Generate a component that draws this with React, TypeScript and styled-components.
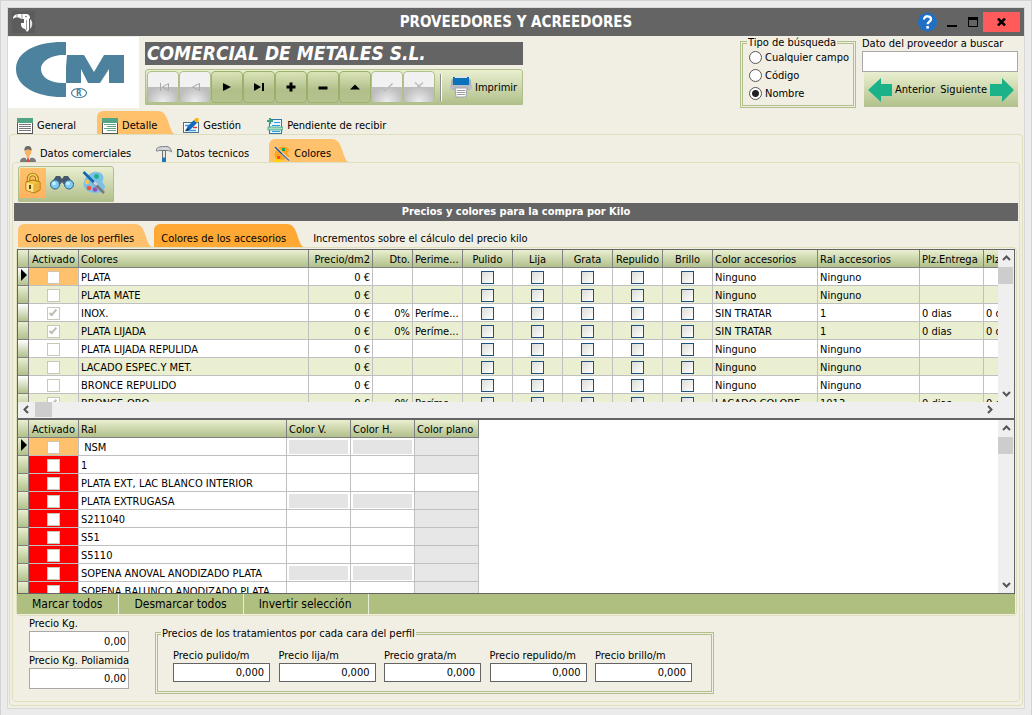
import React from "react";
import styled, { createGlobalStyle, css } from "styled-components";

const c = {
  frame: "#ebebeb",
  body: "#f1efe3",
  dark: "#646464",
  line: "#e0dfbd",
  green: "#b1c08b",
  greenLight: "#e9efd0",
  bar: "#afbf80",
  orange: "#ffc16b",
  orangeDark: "#ffa833",
  cell: "#c0c0c0",
};

const fade = `linear-gradient(${c.greenLight}, ${c.green})`;

const GlobalStyle = createGlobalStyle`
  *, *::before, *::after { box-sizing: border-box; }
  body { margin: 0; background: ${c.frame}; }
  body, button, input, legend, table {
    font-family: "DejaVu Sans Condensed", Tahoma, "DejaVu Sans", sans-serif;
    font-size: 11px;
    line-height: 15px;
    color: #000;
  }
  button { border: 0; padding: 0; background: none; white-space: nowrap; }
  svg { display: block; flex: none; }
`;

const Frame = styled.div`
  min-width: 1000px;
  min-height: 100vh;
  padding: 7px;
  border: 1px solid #d3d3d3;
  background: ${c.frame};
`;

const Window = styled.main`
  background: ${c.body};
  box-shadow: 0 0 0 1px #d9d9d9;
  padding-bottom: 2px;
`;

/* ---------- title bar ---------- */

const TitleBar = styled.header`
  display: grid;
  grid-template-columns: 1fr auto 1fr;
  align-items: center;
  height: 28px;
  padding: 0 4px;
  background: ${c.dark};
`;

const Title = styled.h1`
  margin: 0;
  font-size: 15px;
  line-height: 20px;
  font-weight: bold;
  color: #fff;
`;

const WindowButtons = styled.div`
  display: flex;
  justify-content: flex-end;
  align-items: center;
`;

const WindowButton = styled.button<{ $kind?: "close" | "help" }>`
  display: grid;
  place-items: center;
  width: ${(p) => (p.$kind === "close" ? 37 : 21)}px;
  height: 20px;
  margin-right: ${(p) => (p.$kind === "help" ? 3 : 0)}px;
  background: ${(p) => (p.$kind === "close" ? "#ff5b5b" : "none")};
`;

/* ---------- provider header ---------- */

const ProviderHeader = styled.section`
  display: flex;
  height: 75px;
  padding-right: 6px;
`;

const Logo = styled.div`
  width: 131px;
  height: 71px;
  margin: 1px 6px 0 0;
  background: #fff;
`;

const ProviderMain = styled.div`
  display: flex;
  flex-direction: column;
  gap: 4px;
  width: 378px;
  margin: 6px auto 0 0;
`;

const ProviderName = styled.h2`
  margin: 0;
  padding-left: 2px;
  background: ${c.dark};
  color: #fff;
  font-size: 19px;
  line-height: 23px;
  font-weight: bold;
  font-style: italic;
`;

const Navigator = styled.div`
  display: flex;
  align-items: center;
  height: 36px;
  padding: 0 1px;
  border: 1px solid ${c.green};
  border-radius: 3px 3px 0 0;
  background: ${fade};
`;

const NavButton = styled.button`
  display: grid;
  place-items: center;
  width: 32px;
  height: 32px;
  border: 1px solid #9cb06c;
  border-radius: 4px;
  background: linear-gradient(#dbe4b9, ${c.green} 60%, #b5c48f);
  &:disabled {
    border-color: ${c.green};
    background: radial-gradient(ellipse at 50% 100%, #eeeeee, #bdbdbd 75%) 0 100% / 100% 50% no-repeat, #f1f1f1;
  }
`;

const NavDivider = styled.span`
  width: 2px;
  height: 27px;
  margin: 0 8px 0 5px;
  border-left: 1px solid #8f8f8f;
  border-right: 1px solid #fff;
`;

const PrintButton = styled.button`
  display: flex;
  align-items: center;
  gap: 3px;
`;

const GroupBox = styled.fieldset`
  margin: 0;
  min-width: 0;
  border: 3px double ${c.green};
  legend {
    padding: 0 1px;
    line-height: 13px;
  }
`;

const SearchType = styled(GroupBox)`
  width: 116px;
  height: 72px;
  padding: 0 4px 3px;
`;

const RadioLabel = styled.label`
  display: flex;
  align-items: center;
  gap: 3px;
  height: 18px;
  padding: 0 0 2px 2px;
  white-space: nowrap;
`;

const Radio = styled.input`
  appearance: none;
  flex: none;
  width: 13px;
  height: 13px;
  margin: 0;
  border: 1px solid #555;
  border-radius: 50%;
  background: #fff;
  &:checked {
    background: radial-gradient(circle, #222 0 3px, #fff 4px);
  }
`;

const Search = styled.div`
  display: flex;
  flex-direction: column;
  width: 156px;
  margin-left: 6px;
`;

const SearchInput = styled.input`
  height: 21px;
  width: 100%;
  border: 1px solid #a8a8a8;
  background: #fff;
`;

const SearchNav = styled.div`
  display: flex;
  justify-content: space-between;
  height: 35px;
  margin-left: 2px;
  padding: 0 4px;
  background: ${fade};
  button {
    display: flex;
    align-items: center;
    gap: 3px;
  }
`;

/* ---------- tabs and panels ---------- */

const TabRow = styled.nav<{ $inset: number; $gap?: number }>`
  display: flex;
  gap: ${(p) => p.$gap ?? 0}px;
  height: 23px;
  padding-left: ${(p) => p.$inset}px;
`;

const Tab = styled.button<{ $fill?: string; $plain?: boolean }>`
  position: relative;
  display: flex;
  align-items: center;
  gap: 4px;
  height: 23px;
  padding: ${(p) => (p.$plain ? "6px 20px 0 7px" : "6px 20px 0 5px")};
  z-index: 0;
  ${(p) =>
    p.$fill &&
    css`
      &::before,
      &::after {
        content: "";
        position: absolute;
        z-index: -1;
        top: 0;
        bottom: 0;
        background: ${p.$fill};
      }
      &::before {
        left: 0;
        right: 19px;
        border-top-left-radius: 6px;
      }
      &::after {
        right: 3px;
        width: 17px;
        clip-path: path("M0 0 C6 0 8 3 10 8 C13 16 14 21 17 23 L0 23 Z");
      }
    `}
`;

const Panel = styled.section<{ $pad: string; $margin: string }>`
  margin: ${(p) => p.$margin};
  padding: ${(p) => p.$pad};
  border: 1px solid ${c.line};
  border-radius: 4px;
`;

const ToolStrip = styled.div`
  display: flex;
  width: 96px;
  height: 36px;
  margin: 3px 5px 0;
  padding: 1px;
  border: 1px solid ${c.green};
  border-radius: 3px 3px 0 0;
  background: ${fade};
`;

const ToolButton = styled.button<{ $active?: boolean }>`
  display: grid;
  place-items: center;
  width: ${(p) => (p.$active ? 26 : 32)}px;
  height: 30px;
  background: ${(p) => (p.$active ? `linear-gradient(${c.orange}, #ffb35f)` : "none")};
`;

const Banner = styled.h3`
  margin: 1px 1px 3px;
  background: ${c.dark};
  color: #fff;
  font-size: 11px;
  line-height: 18px;
  text-align: center;
`;

/* ---------- grids ---------- */

const Grid = styled.div<{ $second?: boolean }>`
  display: grid;
  grid-template-columns: minmax(0, 1fr) 16px;
  grid-template-rows: ${(p) => (p.$second ? "173px" : "152px 16px")};
  border: 1px solid ${c.dark};
  background: #fff;
`;

const Viewport = styled.div`
  overflow: hidden;
`;

const Table = styled.table<{ $width: number }>`
  width: ${(p) => p.$width}px;
  table-layout: fixed;
  border-collapse: separate;
  border-spacing: 0;
`;

type Align = "left" | "right" | "center";

const Th = styled.th<{ $align?: Align }>`
  height: 18px;
  padding: 2px 2px 0;
  border-right: 1px solid #808080;
  border-bottom: 1px solid #808080;
  background: ${fade};
  font-weight: normal;
  line-height: 15px;
  text-align: ${(p) => p.$align ?? "left"};
  white-space: nowrap;
  overflow: hidden;
`;

const Td = styled.td<{ $align?: Align; $fill?: string }>`
  height: 18px;
  padding: 2px 2px 0;
  border-right: 1px solid ${c.cell};
  border-bottom: 1px solid ${c.cell};
  background: ${(p) => p.$fill ?? "none"};
  line-height: 15px;
  text-align: ${(p) => p.$align ?? "left"};
  white-space: pre;
  overflow: hidden;
`;

const CheckTd = styled(Td)`
  padding: 1px 0 0;
  line-height: 0;
`;

const Gutter = styled.td<{ $white?: boolean }>`
  height: 18px;
  padding: 1px 0 0 3px;
  border-right: 1px solid #808080;
  border-bottom: 1px solid #808080;
  background: linear-gradient(${(p) => (p.$white ? "#fff" : c.greenLight)}, ${c.green});
  vertical-align: top;
`;

const Row = styled.tr<{ $alt?: boolean }>`
  background: ${(p) => (p.$alt ? c.greenLight : "#fff")};
`;

const Check = styled.input<{ $muted?: boolean }>`
  appearance: none;
  position: relative;
  width: 13px;
  height: 13px;
  margin: 0;
  border: 1px solid ${(p) => (p.$muted ? "#c8c8ba" : "#1c5180")};
  background: ${(p) => (p.$muted ? "#fff" : "linear-gradient(135deg, #dcdcd7, #fff)")};
  vertical-align: middle;
  &:checked::after {
    content: "";
    position: absolute;
    left: 3px;
    top: 0;
    width: 4px;
    height: 8px;
    border: solid #bcbcae;
    border-width: 0 2px 2px 0;
    transform: rotate(42deg);
  }
`;

const Swatch = styled.div`
  height: 14px;
  margin-bottom: 1px;
  background: #e4e4e4;
`;

const ScrollBar = styled.div<{ $horizontal?: boolean }>`
  display: flex;
  flex-direction: ${(p) => (p.$horizontal ? "row" : "column")};
  background: #efefef;
`;

const ScrollCorner = styled.div`
  background: #efefef;
`;

const ScrollButton = styled.button<{ $horizontal?: boolean }>`
  display: grid;
  place-items: center;
  width: ${(p) => (p.$horizontal ? 17 : 16)}px;
  height: ${(p) => (p.$horizontal ? 15 : 17)}px;
`;

const Thumb = styled.div<{ $horizontal?: boolean }>`
  width: ${(p) => (p.$horizontal ? 17 : 15)}px;
  height: ${(p) => (p.$horizontal ? 15 : 17)}px;
  margin-bottom: auto;
  margin-right: auto;
  background: #cdcdcd;
`;

const ActionBar = styled.div`
  display: flex;
  height: 20px;
  background: ${c.bar};
  button {
    padding: 0 16px 0 15px;
    border-right: 1px solid #e8eed8;
    font-size: 12px;
    line-height: 20px;
  }
`;

/* ---------- prices ---------- */

const Prices = styled.section`
  display: flex;
  align-items: flex-start;
  gap: 26px;
  padding: 0 16px 7px;
`;

const KgPrices = styled.div`
  display: flex;
  flex-direction: column;
  gap: 1px;
  width: 100px;
`;

const Field = styled.label<{ $strong?: boolean }>`
  display: flex;
  flex-direction: column;
  width: ${(p) => (p.$strong ? "97px" : "auto")};
  white-space: nowrap;
  input {
    width: 100%;
    height: ${(p) => (p.$strong ? 19 : 21)}px;
    padding: 0 ${(p) => (p.$strong ? 5 : 2)}px;
    border: 1px solid ${(p) => (p.$strong ? c.dark : "#a8a8a8")};
    background: #fff;
    text-align: right;
  }
`;

const Treatments = styled(GroupBox)`
  display: flex;
  justify-content: space-between;
  width: 559px;
  height: 67px;
  margin-top: 11px;
  padding: 8px 19px 8px 15px;
  legend {
    margin-left: -12px;
  }
`;

/* ---------- icons ---------- */

const ToucanIcon = () => (
  <svg width="23" height="22" viewBox="0 0 23 22">
    <rect width="23" height="22" fill="#5c5c5c" />
    <path d="M1 8 C1 4 4 3 8 3 H14 C17 3 18 5 18 7 L17 8 V19 L15 21 L13 18 C9 17 9 14 9 12 H12 V8 H9 L8 7 C6 6 3 6 1 8Z" fill="#fff" />
    <path d="M18 8 C21 10 21 15 18 18Z" fill="#e4e4e4" />
    <path d="M5 3V7M10 3V8M14.500 9V19" stroke="#9a9a9a" fill="none" />
    <circle cx="14" cy="5.500" r="0.800" fill="#646464" />
  </svg>
);

const HelpIcon = () => (
  <svg width="19" height="20" viewBox="0 0 19 20">
    <circle cx="9.500" cy="10" r="9.500" fill="#1f6fc4" />
    <path d="M6 7.500 C6 3 13 3.500 13 7.200 C13 9.600 9.600 9.600 9.600 12.300" fill="none" stroke="#fff" strokeWidth="2.300" />
    <rect x="8.300" y="14" width="2.600" height="2.600" fill="#fff" />
  </svg>
);

const LogoMark = () => (
  <svg width="131" height="71" viewBox="0 0 131 71">
    <g fill="#4c829e">
      <path d="M58 5 C30 4 8 14 8 32 C8 50 30 61 58 60 V46 C44 47 33 41 33 32 C33 24 44 17 58 18 Z" />
      <path d="M59 18 H76 L86 35 L96 18 H116 V46 H101 V32 L92 46 H80 L73 32 V46 H58 V30 Z" />
    </g>
    <ellipse cx="71" cy="56" rx="7.500" ry="4.500" fill="#fff" stroke="#4c829e" strokeWidth="1.200" />
    <text x="68" y="59" fontSize="8" fontWeight="bold" fill="#4c829e">R</text>
  </svg>
);

const glyphs: Record<string, React.ReactNode> = {
  first: <path d="M4.500 3V11M12.500 3.500 L6.500 7 L12.500 10.500Z" stroke="#a9a9a9" fill="none" />,
  prev: <path d="M11.500 3.500 L4.500 7 L11.500 10.500Z" stroke="#a9a9a9" fill="none" />,
  next: <path d="M3 3 L11 7 L3 11Z" />,
  last: <path d="M2 3 L9 7 L2 11Z M10 3H12V11H10Z" />,
  add: <path d="M5.500 2.500H8.500V5.500H11.500V8.500H8.500V11.500H5.500V8.500H2.500V5.500H5.500Z" />,
  remove: <path d="M2.500 6.500H11.500V9.500H2.500Z" />,
  up: <path d="M2 9.500 L7 4.500 L12 9.500Z" />,
  accept: <path d="M2.500 8 L5 11 L12.500 3.500" stroke="#bcbcbc" strokeWidth="1.500" fill="none" />,
  cancel: <path d="M3 2.500 L7 6 L11 2.500 M4.500 8 L7 6 L9.500 8" stroke="#bcbcbc" strokeWidth="1.500" fill="none" />,
};

const Glyph = ({ name }: { name: string }) => (
  <svg width="14" height="14" viewBox="0 0 14 14">{glyphs[name]}</svg>
);

const PrinterIcon = () => (
  <svg width="22" height="22" viewBox="0 0 22 22">
    <rect x="1" y="3" width="20" height="11" rx="2" fill="#a9adb2" />
    <rect x="3" y="1" width="16" height="9" fill="#0a72bb" />
    <rect x="5" y="0" width="12" height="2" fill="#dfe3e6" />
    <rect x="0" y="9" width="22" height="4" rx="1" fill="#b9bdc1" />
    <path d="M5 12H17L16 21H6Z" fill="#fff" stroke="#9da1a5" />
    <path d="M6.500 14.500H15.500M6.500 16.500H15.500M7 18.500H15" stroke="#9da1a5" />
  </svg>
);

const ArrowIcon = ({ right }: { right?: boolean }) => (
  <svg width="24" height="24" viewBox="0 0 24 24">
    <path
      d={right ? "M0 6H12V0L24 12L12 24V18H0Z" : "M24 6H13V0L0 12L13 24V18H24Z"}
      fill="#1bb28a"
    />
  </svg>
);

const ListIcon = ({ detail }: { detail?: boolean }) => (
  <svg width="16" height="16" viewBox="0 0 16 16">
    <rect x="0.500" y="0.500" width="15" height="15" fill="#fff" stroke="#555" />
    <rect width="16" height="5" fill="#52a584" />
    {detail ? (
      <path d="M2 6.500H14M5 8.500H14M2 10.500H14M5 12.500H14" stroke="#5fa68b" />
    ) : (
      <path d="M2 6.500H14M2 8.500H14M2 10.500H14M2 12.500H14" stroke="#777" />
    )}
  </svg>
);

const PencilFormIcon = () => (
  <svg width="16" height="16" viewBox="0 0 16 16">
    <rect x="0.500" y="4.500" width="15" height="10" fill="#fff" stroke="#4d6f90" />
    <path d="M2 7.500H7M2 12.500H13" stroke="#2f9be0" strokeWidth="1.500" />
    <path d="M10 9.500H14" stroke="#e33" strokeWidth="1.500" />
    <path d="M3 13 L4.500 8.500 L11 2 L14 5 L7.500 11.500Z" fill="#1268c4" />
    <path d="M3 13 L4 10 L6 12Z" fill="#222" />
    <path d="M11 2 L13 0 H15.500 V3.500 L14 5Z" fill="#ffb400" />
  </svg>
);

const PendingIcon = () => (
  <svg width="16" height="16" viewBox="0 0 16 16">
    <rect x="2.500" y="1.500" width="12" height="14" fill="#eaf6fd" stroke="#2b78a8" />
    <path d="M7 4.500H13M5 7.500H13M5 13.500H13" stroke="#2f9be0" />
    <rect x="1" y="9" width="15" height="3" fill="#a5dbc7" stroke="#3fa381" strokeWidth="0.800" />
    <path d="M3 0V6M0 3H6" stroke="#3fa381" strokeWidth="2.200" />
  </svg>
);

const PersonIcon = () => (
  <svg width="16" height="16" viewBox="0 0 16 16">
    <path d="M0 16 C0 12 3 11.500 8 11.500 C13 11.500 16 12 16 16Z" fill="#777c82" />
    <path d="M5 11 L8 16 L11 11Z" fill="#fff" />
    <path d="M7.300 12H8.700L9.300 16H6.700Z" fill="#e5432e" />
    <ellipse cx="8" cy="5.500" rx="3.200" ry="4.200" fill="#f9b262" />
    <rect x="6.500" y="8" width="3" height="4" fill="#f9b262" />
    <path d="M4.500 5 C4 1 6 0 8 0 C10 0 12 1 11.500 5 C10 3 6 3 4.500 5Z" fill="#6a6a6a" />
  </svg>
);

const HammerIcon = () => (
  <svg width="16" height="16" viewBox="0 0 16 16">
    <path d="M0.500 3 C2 1 4 0.500 11 0.500 C14 1 15 3 15.500 6 C14 5 13 4.500 11 4.500 H3 C2 4.500 2 5.500 0.500 5Z" fill="#d4d6d8" stroke="#7d8185" />
    <path d="M6.500 4.500H9.500V12H6.500Z" fill="#e4e6e8" stroke="#6d7175" />
    <rect x="6" y="12" width="4" height="4" fill="#1e74b8" />
  </svg>
);

const ColorsIcon = () => (
  <svg width="16" height="16" viewBox="0 0 16 16">
    <path d="M2 4 C4 1 8 0 12 1 C15 2 16 4 14 6 C12 8 16 9 15 11 C11 14 5 15 1 12 C0 9 1 6 2 4Z" fill="#ffa41c" />
    <rect x="8" y="2" width="3" height="3" fill="#1ea35b" />
    <path d="M0 16 L2 11 L9 16Z" fill="#ffd400" />
    <rect x="3" y="10" width="3" height="3" fill="#ff4a2e" />
    <path d="M1 1 L15 14" stroke="#ffe8b8" strokeWidth="2.600" />
    <path d="M1 1 L8 8" stroke="#2a4f86" strokeWidth="1.600" />
    <path d="M8 8 L15 14.500" stroke="#4f6fa8" strokeWidth="1.600" />
  </svg>
);

const LockIcon = () => (
  <svg width="18" height="22" viewBox="0 0 18 22">
    <path d="M4.500 11V7 C4.500 1 13 1 13 7 V10" fill="none" stroke="#9a6a10" strokeWidth="3.400" />
    <path d="M4.500 11V7 C4.500 1 13 1 13 7 V10" fill="none" stroke="#f3cf55" strokeWidth="1.800" />
    <path d="M2 10 L9 8 L16 10 V18 L10 21 L2 18Z" fill="#f2c443" stroke="#a8700c" />
    <path d="M2.500 10.500 L9.500 12.500 V20.500 L2.500 18Z" fill="#fbe38f" />
    <path d="M9.500 12.500 L15.500 10.500 V17.500 L9.500 20.500Z" fill="#e9b13a" />
    <path d="M6 13V17" stroke="#6b4300" strokeWidth="2" />
  </svg>
);

const BinocularsIcon = () => (
  <svg width="24" height="14" viewBox="0 0 24 14">
    <path d="M4 3 L6 0 H10 L12 3 L14 0 H18 L20 3 L22 7 L15 10 L12 6 L9 10 L2 7Z" fill="#46586c" />
    <circle cx="5" cy="8.500" r="4.500" fill="#7ecdf2" stroke="#2d5f84" />
    <circle cx="19" cy="8.500" r="4.500" fill="#7ecdf2" stroke="#2d5f84" />
    <circle cx="4" cy="7.500" r="1.800" fill="#c9eefd" />
    <circle cx="18" cy="7.500" r="1.800" fill="#c9eefd" />
  </svg>
);

const PaletteIcon = () => (
  <svg width="24" height="24" viewBox="0 0 24 24">
    <path d="M12 1 C19 0 23 5 21 9 C19 12 23 13 23 16 C22 22 14 23 8 21 C2 19 0 13 3 8 C5 4 8 2 12 1Z" fill="#7cc0e6" />
    <circle cx="14.500" cy="5.500" r="2.400" fill="#1fae8a" />
    <circle cx="5" cy="11" r="2.200" fill="#fbc44c" />
    <circle cx="7" cy="17" r="2.300" fill="#f0533a" />
    <circle cx="13" cy="18.500" r="2.300" fill="#9a4fb5" />
    <path d="M1.500 1 L14 13.500" stroke="#1467ad" strokeWidth="2.600" />
    <path d="M13 13 L22 22" stroke="#77797c" strokeWidth="2.600" />
    <path d="M12 11 L15 14" stroke="#cfd3d6" strokeWidth="3" />
  </svg>
);

const chevrons: Record<string, string> = {
  up: "M1 6 L4.500 2.500 L8 6",
  down: "M1 3 L4.500 6.500 L8 3",
  left: "M6 1 L2.500 4.500 L6 8",
  right: "M3 1 L6.500 4.500 L3 8",
};

const Chevron = ({ to }: { to: string }) => (
  <svg width="9" height="9" viewBox="0 0 9 9">
    <path d={chevrons[to]} fill="none" stroke="#555" strokeWidth="2" />
  </svg>
);

const Marker = () => (
  <svg width="6" height="12" viewBox="0 0 6 12">
    <path d="M0 0 L6 6 L0 12Z" />
  </svg>
);

/* ---------- data ---------- */

const navItems: { icon: string; label: string; disabled?: boolean }[] = [
  { icon: "first", label: "Primero", disabled: true },
  { icon: "prev", label: "Registro anterior", disabled: true },
  { icon: "next", label: "Registro siguiente" },
  { icon: "last", label: "Último" },
  { icon: "add", label: "Añadir" },
  { icon: "remove", label: "Borrar" },
  { icon: "up", label: "Editar" },
  { icon: "accept", label: "Aceptar", disabled: true },
  { icon: "cancel", label: "Cancelar", disabled: true },
];

const colorColumns: { title: string; width: number; align?: Align }[] = [
  { title: "Activado", width: 50, align: "center" },
  { title: "Colores", width: 230 },
  { title: "Precio/dm2", width: 64, align: "right" },
  { title: "Dto.", width: 40, align: "right" },
  { title: "Perime...", width: 50 },
  { title: "Pulido", width: 50, align: "center" },
  { title: "Lija", width: 50, align: "center" },
  { title: "Grata", width: 50, align: "center" },
  { title: "Repulido", width: 50, align: "center" },
  { title: "Brillo", width: 50, align: "center" },
  { title: "Color accesorios", width: 105 },
  { title: "Ral accesorios", width: 102 },
  { title: "Plz.Entrega", width: 64 },
  { title: "Plz.Entrega", width: 64 },
];

const treatments = ["Pulido", "Lija", "Grata", "Repulido", "Brillo"];

const colorRows = [
  { name: "PLATA", on: false, color: "Ninguno", ral: "Ninguno" },
  { name: "PLATA MATE", on: false, color: "Ninguno", ral: "Ninguno" },
  { name: "INOX.", on: true, color: "SIN TRATAR", ral: "1" },
  { name: "PLATA LIJADA", on: true, color: "SIN TRATAR", ral: "1" },
  { name: "PLATA LIJADA REPULIDA", on: false, color: "Ninguno", ral: "Ninguno" },
  { name: "LACADO ESPEC.Y MET.", on: false, color: "Ninguno", ral: "Ninguno" },
  { name: "BRONCE REPULIDO", on: false, color: "Ninguno", ral: "Ninguno" },
  { name: "BRONCE-ORO", on: true, color: "LACADO COLORE", ral: "1013" },
];

const ralColumns: { title: string; width: number; align?: Align }[] = [
  { title: "Activado", width: 50, align: "center" },
  { title: "Ral", width: 208 },
  { title: "Color V.", width: 64 },
  { title: "Color H.", width: 64 },
  { title: "Color plano", width: 64 },
];

const ralRows = [
  { name: " NSM", swatch: true, flat: true },
  { name: "1", swatch: false, flat: true },
  { name: "PLATA EXT, LAC BLANCO INTERIOR", swatch: false, flat: false },
  { name: "PLATA EXTRUGASA", swatch: true, flat: true },
  { name: "S211040", swatch: false, flat: true },
  { name: "S51", swatch: false, flat: true },
  { name: "S5110", swatch: false, flat: true },
  { name: "SOPENA ANOVAL ANODIZADO PLATA", swatch: true, flat: true },
  { name: "SOPENA BALUNCO ANODIZADO PLATA", swatch: false, flat: true },
];

const VerticalScroll = () => (
  <ScrollBar>
    <ScrollButton aria-label="Subir"><Chevron to="up" /></ScrollButton>
    <Thumb />
    <ScrollButton aria-label="Bajar"><Chevron to="down" /></ScrollButton>
  </ScrollBar>
);

const sum = (cols: { width: number }[]) => cols.reduce((t, col) => t + col.width, 11);

const Head = ({ columns }: { columns: typeof colorColumns }) => (
  <>
    <colgroup>
      <col width={11} />
      {columns.map((col, i) => <col key={i} width={col.width} />)}
    </colgroup>
    <thead>
      <tr>
        <Th />
        {columns.map((col, i) => <Th key={i} $align={col.align}>{col.title}</Th>)}
      </tr>
    </thead>
  </>
);

const ColorsGrid = () => (
  <Grid>
    <Viewport>
      <Table $width={sum(colorColumns)}>
        <Head columns={colorColumns} />
        <tbody>
          {colorRows.map((r, i) => (
            <Row key={r.name} $alt={i % 2 === 1}>
              <Gutter $white={i % 2 === 0}>{i === 0 && <Marker />}</Gutter>
              <CheckTd $align="center" $fill={i === 0 ? c.orange : undefined}>
                <Check type="checkbox" $muted defaultChecked={r.on} aria-label={`Activado ${r.name}`} />
              </CheckTd>
              <Td>{r.name}</Td>
              <Td $align="right">0 €</Td>
              <Td $align="right">{r.on && "0%"}</Td>
              <Td>{r.on && "Períme..."}</Td>
              {treatments.map((t) => (
                <CheckTd key={t} $align="center">
                  <Check type="checkbox" aria-label={`${t} ${r.name}`} />
                </CheckTd>
              ))}
              <Td>{r.color}</Td>
              <Td>{r.ral}</Td>
              <Td>{r.on && "0 dias"}</Td>
              <Td>{r.on && "0 dias"}</Td>
            </Row>
          ))}
        </tbody>
      </Table>
    </Viewport>
    <VerticalScroll />
    <ScrollBar $horizontal>
      <ScrollButton $horizontal aria-label="Izquierda"><Chevron to="left" /></ScrollButton>
      <Thumb $horizontal />
      <ScrollButton $horizontal aria-label="Derecha"><Chevron to="right" /></ScrollButton>
    </ScrollBar>
    <ScrollCorner />
  </Grid>
);

const RalGrid = () => (
  <Grid $second>
    <Viewport>
      <Table $width={sum(ralColumns)}>
        <Head columns={ralColumns} />
        <tbody>
          {ralRows.map((r, i) => (
            <Row key={r.name}>
              <Gutter>{i === 0 && <Marker />}</Gutter>
              <CheckTd $align="center" $fill={i === 0 ? c.orange : "#f00"}>
                <Check type="checkbox" $muted aria-label={`Activado ${r.name}`} />
              </CheckTd>
              <Td>{r.name}</Td>
              <Td>{r.swatch && <Swatch />}</Td>
              <Td>{r.swatch && <Swatch />}</Td>
              <Td $fill={r.flat ? "#e7e7e7" : undefined} />
            </Row>
          ))}
        </tbody>
      </Table>
    </Viewport>
    <VerticalScroll />
  </Grid>
);

export default function App() {
  return (
    <Frame>
      <GlobalStyle />
      <Window>
        <TitleBar>
          <ToucanIcon />
          <Title>PROVEEDORES Y ACREEDORES</Title>
          <WindowButtons>
            <WindowButton $kind="help" aria-label="Ayuda"><HelpIcon /></WindowButton>
            <WindowButton aria-label="Minimizar">
              <svg width="10" height="12"><rect y="9" width="10" height="2" /></svg>
            </WindowButton>
            <WindowButton aria-label="Maximizar">
              <svg width="10" height="10"><path d="M0.500 1.500H9.500V9.500H0.500Z" fill="none" stroke="#000" /><rect width="10" height="3" /></svg>
            </WindowButton>
            <WindowButton $kind="close" aria-label="Cerrar">
              <svg width="9" height="8"><path d="M1 0.500 L8 7.500 M8 0.500 L1 7.500" stroke="#000" strokeWidth="2.500" /></svg>
            </WindowButton>
          </WindowButtons>
        </TitleBar>

        <ProviderHeader>
          <Logo><LogoMark /></Logo>
          <ProviderMain>
            <ProviderName>COMERCIAL DE METALES S.L.</ProviderName>
            <Navigator>
              {navItems.map((n) => (
                <NavButton key={n.icon} disabled={n.disabled} aria-label={n.label}>
                  <Glyph name={n.icon} />
                </NavButton>
              ))}
              <NavDivider />
              <PrintButton><PrinterIcon />Imprimir</PrintButton>
            </Navigator>
          </ProviderMain>
          <SearchType>
            <legend>Tipo de búsqueda</legend>
            {["Cualquier campo", "Código", "Nombre"].map((t) => (
              <RadioLabel key={t}>
                <Radio type="radio" name="tipo" defaultChecked={t === "Nombre"} />
                {t}
              </RadioLabel>
            ))}
          </SearchType>
          <Search>
            <label htmlFor="buscar">Dato del proveedor a buscar</label>
            <SearchInput id="buscar" />
            <SearchNav>
              <button><ArrowIcon />Anterior</button>
              <button>Siguiente<ArrowIcon right /></button>
            </SearchNav>
          </Search>
        </ProviderHeader>

        <TabRow $inset={4} $gap={1}>
          <Tab><ListIcon />General</Tab>
          <Tab $fill={c.orange}><ListIcon detail />Detalle</Tab>
          <Tab><PencilFormIcon />Gestión</Tab>
          <Tab><PendingIcon />Pendiente de recibir</Tab>
        </TabRow>
        <Panel $margin="0 1px" $pad="4px 2px 3px">
          <TabRow $inset={3}>
            <Tab><PersonIcon />Datos comerciales</Tab>
            <Tab><HammerIcon />Datos tecnicos</Tab>
            <Tab $fill={c.orange}><ColorsIcon />Colores</Tab>
          </TabRow>
          <Panel $margin="0" $pad="0">
            <ToolStrip>
              <ToolButton $active aria-label="Bloquear"><LockIcon /></ToolButton>
              <ToolButton aria-label="Buscar"><BinocularsIcon /></ToolButton>
              <ToolButton aria-label="Paleta de colores"><PaletteIcon /></ToolButton>
            </ToolStrip>
            <Banner>Precios y colores para la compra por Kilo</Banner>
            <TabRow $inset={5}>
              <Tab $plain $fill={c.orange}>Colores de los perfiles</Tab>
              <Tab $plain $fill={c.orangeDark}>Colores de los accesorios</Tab>
              <Tab $plain>Incrementos sobre el cálculo del precio kilo</Tab>
            </TabRow>
            <Panel $margin="0 2px 0 3px" $pad="1px 1px 1px 0">
              <ColorsGrid />
              <RalGrid />
              <ActionBar>
                <button>Marcar todos</button>
                <button>Desmarcar todos</button>
                <button>Invertir selección</button>
              </ActionBar>
            </Panel>
            <Prices>
              <KgPrices>
                <Field>Precio Kg.<input defaultValue="0,00" /></Field>
                <Field>Precio Kg. Poliamida<input defaultValue="0,00" /></Field>
              </KgPrices>
              <Treatments>
                <legend>Precios de los tratamientos por cada cara del perfil</legend>
                {treatments.map((t) => (
                  <Field key={t} $strong>
                    Precio {t.toLowerCase()}/m
                    <input defaultValue="0,000" />
                  </Field>
                ))}
              </Treatments>
            </Prices>
          </Panel>
        </Panel>
      </Window>
    </Frame>
  );
}
